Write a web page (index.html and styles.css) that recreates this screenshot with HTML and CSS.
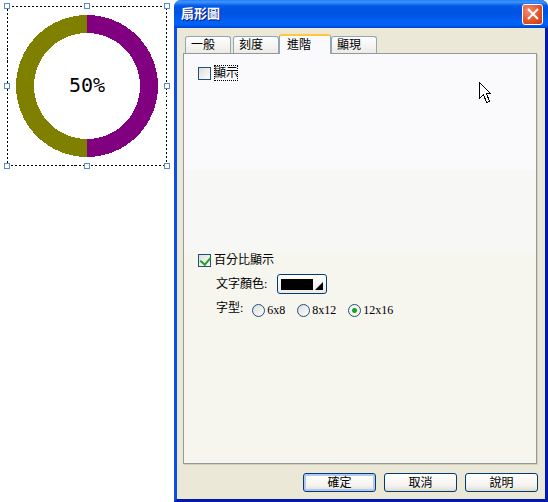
FILE: index.html
```html
<!DOCTYPE html>
<html lang="zh-Hant">
<head>
    <meta charset="UTF-8">
    <meta name="viewport" content="width=device-width, initial-scale=1.0">
    <title>扇形圖</title>
    <link rel="stylesheet" href="styles.css">
</head>
<body>
    <div class="preview">
        <div class="chart">
            <svg width="162" height="162" viewBox="0 0 162 162" shape-rendering="crispEdges">
                <path d="M81 9 A71 71 0 0 0 81 151 V133 A53 53 0 0 1 81 27 Z" fill="#808000"/>
                <path d="M81 9 A71 71 0 0 1 81 151 V133 A53 53 0 0 0 81 27 Z" fill="#800080"/>
                <rect x="1.5" y="0.5" width="159" height="159" fill="none" stroke="#000" stroke-dasharray="2 2"/>
                <g fill="#fff" stroke="#5b8bd0">
                    <rect x="-1.5" y="-2.5" width="5" height="5"/>
                    <rect x="78.5" y="-2.5" width="5" height="5"/>
                    <rect x="158.5" y="-2.5" width="5" height="5"/>
                    <rect x="-1.5" y="77.5" width="5" height="5"/>
                    <rect x="158.5" y="77.5" width="5" height="5"/>
                    <rect x="-1.5" y="157.5" width="5" height="5"/>
                    <rect x="78.5" y="157.5" width="5" height="5"/>
                    <rect x="158.5" y="157.5" width="5" height="5"/>
                </g>
            </svg>
            <span class="percent">50%</span>
        </div>
    </div>

    <form class="dialog">
        <div class="titlebar">
            <h1>扇形圖</h1>
            <button type="button" class="close-button" aria-label="關閉">
                <svg width="12" height="12" viewBox="0 0 12 12">
                    <path d="M1 1 L11 11 M11 1 L1 11" stroke="#fff" stroke-width="2"/>
                </svg>
            </button>
        </div>
        <div class="dialog-body">
            <div class="tabs" role="tablist">
                <button type="button" class="tab" role="tab">一般</button>
                <button type="button" class="tab" role="tab">刻度</button>
                <button type="button" class="tab active" role="tab" aria-selected="true">進階</button>
                <button type="button" class="tab" role="tab">顯現</button>
            </div>
            <div class="panel">
                <div class="group">
                    <label class="check"><input type="checkbox"><span class="focused">顯示</span></label>
                </div>
                <div class="group-percent">
                    <label class="check"><input type="checkbox" checked><span>百分比顯示</span></label>
                    <div class="row">
                        <label for="textColor">文字顏色:</label>
                        <button type="button" class="color-button" id="textColor">
                            <span class="swatch"></span>
                            <svg width="8" height="8" viewBox="0 0 8 8"><path d="M8 0 V8 H0 Z"/></svg>
                        </button>
                    </div>
                    <div class="row fonts" role="radiogroup" aria-labelledby="fontLabel">
                        <span id="fontLabel">字型:</span>
                        <div class="radios">
                            <label class="radio"><input type="radio" name="font">6x8</label>
                            <label class="radio"><input type="radio" name="font">8x12</label>
                            <label class="radio"><input type="radio" name="font" checked>12x16</label>
                        </div>
                    </div>
                </div>
            </div>
            <div class="buttons">
                <button type="button" class="button default">確定</button>
                <button type="button" class="button">取消</button>
                <button type="button" class="button">說明</button>
            </div>
        </div>
        <svg class="cursor" width="13" height="22" viewBox="0 0 13 22" shape-rendering="crispEdges">
            <path d="M0.5 0.5 V16.5 L4.5 12.5 L7.5 20.5 L10.5 19.5 L7.5 11.5 H11.5 Z" fill="#fff" stroke="#000"/>
        </svg>
    </form>
</body>
</html>
```

FILE: styles.css
```css
* {
    box-sizing: border-box;
}

body {
    display: flex;
    min-height: 100vh;
    margin: 0;
    background-color: #fff;
    color: #000;
    font-family: "Liberation Serif", "Noto Sans CJK TC", serif;
    font-size: 12px;
    line-height: 16px;
}

button {
    padding: 0;
    color: inherit;
    font: inherit;
}

svg {
    display: block;
}

/* Chart preview */
.preview {
    flex: none;
    width: 174px;
    padding: 6px;
}

.chart {
    display: grid;
    place-items: center;
    width: 162px;
}

.chart svg,
.percent {
    grid-area: 1 / 1;
}

.chart svg {
    overflow: visible;
}

.percent {
    padding-bottom: 4px;
    font-family: "DejaVu Sans Mono", monospace;
    font-size: 20px;
    line-height: 20px;
}

/* Dialog window */
.dialog {
    position: relative;
    display: flex;
    flex: 1;
    flex-direction: column;
    border: 3px solid #0a4fe0;
    border-top: 0;
    border-right-color: #0019b0;
    border-bottom-color: #0019b0;
    border-radius: 7px 7px 0 0;
    background-color: #ebe8d7;
}

.titlebar {
    display: flex;
    align-items: center;
    justify-content: space-between;
    height: 28px;
    margin: 0 -3px;
    padding: 0 5px 0 7px;
    border-radius: 7px 7px 0 0;
    background: linear-gradient(#2a7df5 0, #3d95ff 2px, #0058e6 6px, #0053e1 14px, #0062f8 22px, #0060f5 25px, #0040c8 28px);
}

h1 {
    margin: 0;
    color: #fff;
    font-size: 13px;
    font-weight: bold;
    text-shadow: 1px 1px #0a1883;
}

.close-button {
    display: grid;
    place-items: center;
    width: 21px;
    height: 21px;
    border: 1px solid #fff;
    border-radius: 3px;
    background: radial-gradient(circle at 30% 30%, #ee8e6f, #e2552d 55%, #c2380f);
}

.dialog-body {
    display: flex;
    flex: 1;
    flex-direction: column;
    padding: 6px 8px 7px 6px;
}

/* Tabs */
.tabs {
    display: flex;
    align-items: flex-end;
    gap: 2px;
    height: 19px;
    padding-left: 2px;
}

.tab {
    width: 46px;
    height: 17px;
    padding-left: 5px;
    border: 1px solid #91a7b4;
    border-bottom: 0;
    border-radius: 3px 3px 0 0;
    background: linear-gradient(#fff, #ecebe5);
    text-align: left;
}

.tab.active {
    z-index: 1;
    width: 52px;
    height: 20px;
    margin: 0 -2px -1px;
    padding-left: 7px;
    border-top: 2px solid #ffc73c;
    background: #fafafd;
}

/* Tab page */
.panel {
    flex: 1;
    padding: 11px 14px;
    border: 1px solid #919b9c;
    background: linear-gradient(#fafafd 114px, #f7f7f5 117px, #f7f7f5 195px, #f6f5ee 202px);
    box-shadow: 1px 1px #d3cfbd;
}

.group {
    min-height: 187px;
}

.group-percent {
    display: flex;
    flex-direction: column;
    gap: 4px;
}

.check {
    display: flex;
    align-items: center;
    gap: 3px;
    width: fit-content;
}

.focused {
    outline: 1px dotted #000;
    outline-offset: -1px;
}

input {
    appearance: none;
    flex: none;
    width: 13px;
    height: 13px;
    margin: 0;
    border: 1px solid #1c5180;
    background: linear-gradient(135deg, #dcdcd7, #fff);
}

input[type="checkbox"]:checked::before {
    content: "";
    display: block;
    width: 5px;
    height: 8px;
    margin: 0 0 0 3px;
    border: solid #21a121;
    border-width: 0 2px 2px 0;
    transform: rotate(40deg);
}

input[type="radio"] {
    border-radius: 50%;
}

input[type="radio"]:checked {
    background: radial-gradient(circle, #21a121 2px, #f4f4f1 3px);
}

.row {
    display: flex;
    align-items: center;
    gap: 10px;
    min-height: 24px;
    padding-left: 18px;
}

.fonts {
    gap: 9px;
    align-items: flex-start;
}

.radios {
    display: flex;
    gap: 12px;
    padding-top: 2px;
}

.radio {
    display: flex;
    align-items: center;
    gap: 2px;
}

.color-button {
    display: flex;
    align-items: center;
    gap: 2px;
    height: 20px;
    padding: 0 3px;
    border: 1px solid #003c74;
    border-radius: 3px;
    background: linear-gradient(#fff, #ecebe5);
}

.swatch {
    width: 32px;
    height: 11px;
    background-color: #000;
}

.color-button svg {
    margin-top: 4px;
}

/* Bottom buttons */
.buttons {
    display: flex;
    justify-content: flex-end;
    gap: 8px;
    margin-right: -1px;
    padding-top: 9px;
}

.button {
    width: 73px;
    height: 19px;
    border: 1px solid #003c74;
    border-radius: 3px;
    background: linear-gradient(#fff, #f4f3ee 70%, #dfdacd);
}

.button.default {
    box-shadow: inset 0 0 0 2px #b4c8f6;
}

.cursor {
    position: absolute;
    top: 82px;
    right: 53px;
}
```
